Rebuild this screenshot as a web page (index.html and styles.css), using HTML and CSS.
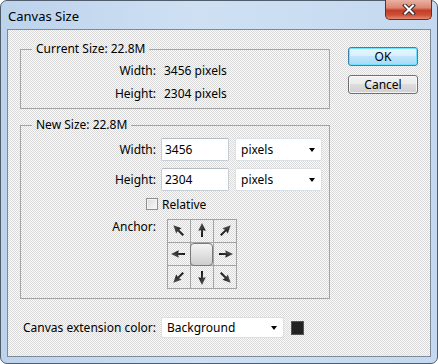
FILE: index.html
```html
<!DOCTYPE html>
<html lang="en">
<head>
    <meta charset="UTF-8">
    <title>Canvas Size</title>
    <link rel="stylesheet" href="styles.css">
</head>
<body>
    <svg width="0" height="0" class="defs">
        <defs>
            <linearGradient id="arrowFill" x1="0" y1="0" x2="1" y2="1">
                <stop offset="0" stop-color="#666"/>
                <stop offset="1" stop-color="#000"/>
            </linearGradient>
            <symbol id="arrow" viewBox="0 0 22 22">
                <polygon points="11,3 14.8,10.8 12,10.2 12,17 10,17 10,10.2 7.2,10.8" fill="url(#arrowFill)"/>
            </symbol>
        </defs>
    </svg>

    <div class="window">
        <div class="titlebar">
            <span class="title">Canvas Size</span>
            <button class="close" type="button">
                <svg width="14" height="11" viewBox="0 0 14 11">
                    <path d="M3 1.5 L11 9.5 M11 1.5 L3 9.5" stroke="#3d2a2a" stroke-width="4" stroke-linecap="square"/>
                    <path d="M3 1.5 L11 9.5 M11 1.5 L3 9.5" stroke="#fff" stroke-width="2" stroke-linecap="square"/>
                </svg>
            </button>
        </div>

        <div class="client">
            <div class="main">
                <div class="groups">
                    <fieldset class="group current">
                        <legend>Current Size: 22.8M</legend>
                        <div class="info-row">
                            <span class="label">Width:</span>
                            <span class="value">3456 pixels</span>
                        </div>
                        <div class="info-row">
                            <span class="label">Height:</span>
                            <span class="value">2304 pixels</span>
                        </div>
                    </fieldset>

                    <fieldset class="group new">
                        <legend>New Size: 22.8M</legend>
                        <div class="field-row">
                            <span class="label">Width:</span>
                            <div class="textbox">3456</div>
                            <div class="combo">pixels<span class="caret"></span></div>
                        </div>
                        <div class="field-row second">
                            <span class="label">Height:</span>
                            <div class="textbox">2304</div>
                            <div class="combo">pixels<span class="caret"></span></div>
                        </div>
                        <div class="check-row">
                            <span class="checkbox"></span>
                            <span>Relative</span>
                        </div>
                        <div class="anchor-row">
                            <span class="label">Anchor:</span>
                            <div class="anchor">
                                <div class="cell"><svg class="nw"><use href="#arrow"/></svg></div>
                                <div class="cell"><svg class="n"><use href="#arrow"/></svg></div>
                                <div class="cell"><svg class="ne"><use href="#arrow"/></svg></div>
                                <div class="cell"><svg class="w"><use href="#arrow"/></svg></div>
                                <div class="cell center"><div class="pin"></div></div>
                                <div class="cell"><svg class="e"><use href="#arrow"/></svg></div>
                                <div class="cell"><svg class="sw"><use href="#arrow"/></svg></div>
                                <div class="cell"><svg class="s"><use href="#arrow"/></svg></div>
                                <div class="cell"><svg class="se"><use href="#arrow"/></svg></div>
                            </div>
                        </div>
                    </fieldset>
                </div>

                <div class="buttons">
                    <button class="btn default" type="button">OK</button>
                    <button class="btn" type="button">Cancel</button>
                </div>
            </div>

            <div class="ext-row">
                <span class="label">Canvas extension color:</span>
                <div class="combo wide">Background<span class="caret"></span></div>
                <span class="swatch"></span>
            </div>
        </div>
    </div>
</body>
</html>
```

FILE: styles.css
```css
:root {
    --line: #a3a3a3;
    --field-border: #c5cdd6;
}

* {
    box-sizing: border-box;
}

body {
    margin: 0;
    font-family: 'Noto Sans', 'Segoe UI', sans-serif;
    font-size: 12px;
    color: #000;
    background: #fff;
}

.defs {
    position: absolute;
}

/* window frame */
.window {
    width: 438px;
    height: 364px;
    display: flex;
    flex-direction: column;
    padding: 0 6px 6px 6px;
    border: 1px solid #4f5d6d;
    border-radius: 7px;
    background: linear-gradient(90deg, #bcd3ec 0%, #cfe0f3 45%, #c4d9ef 100%);
}

.titlebar {
    height: 28px;
    margin: 0 -6px;
    padding: 2px 5px 0 7px;
    display: flex;
    align-items: flex-start;
}

.title {
    font-size: 13px;
    line-height: 26px;
    color: #000;
}

.close {
    margin: -3px 0 0 auto;
    width: 47px;
    height: 20px;
    padding: 0;
    border: 1px solid #6d2a21;
    border-top: none;
    border-radius: 0 0 5px 5px;
    background: linear-gradient(#eab1a3 0%, #dc8773 40%, #c33d27 55%, #cf5139 80%, #e28c72 100%);
    display: flex;
    align-items: center;
    justify-content: center;
}

.client {
    flex: 1;
    border: 1px solid #7d8a99;
    padding: 0 12px;
    background-color: #ebebeb;
    background-image: conic-gradient(#fafafa 25%, #dadada 0 50%, #fafafa 0 75%, #dadada 0);
    background-size: 2px 2px;
}

.main {
    display: flex;
    gap: 18px;
}

.groups {
    width: 310px;
}

/* group boxes */
.group {
    margin: 0;
    padding: 2px 0 3px 0;
    border: 1px solid var(--line);
    min-width: 0;
}

.group.current {
    margin-top: 11px;
}

.group.new {
    margin-top: 8px;
    padding: 5px 0 9px 0;
}

legend {
    margin-left: 11px;
    padding: 0 4px;
    line-height: 16px;
}

.label {
    width: 135px;
    text-align: right;
    flex-shrink: 0;
}

.info-row {
    height: 23px;
    display: flex;
    align-items: center;
    gap: 8px;
}

.field-row {
    display: flex;
    align-items: center;
    gap: 5px;
}

.field-row.second {
    margin-top: 7px;
}

.textbox {
    width: 68px;
    height: 23px;
    padding-left: 3px;
    line-height: 21px;
    background: #fff;
    border: 1px solid var(--field-border);
    border-top-color: #b4bcc6;
    border-radius: 2px;
}

.combo {
    width: 87px;
    height: 23px;
    margin-left: 1px;
    padding-left: 5px;
    line-height: 21px;
    display: flex;
    align-items: center;
    background: #fff;
    border: 1px solid #d9e0e6;
    border-radius: 2px;
}

.caret {
    margin: 1px 6px 0 auto;
    border-left: 3.5px solid transparent;
    border-right: 3.5px solid transparent;
    border-top: 4px solid #000;
}

.check-row {
    margin-top: 4px;
    height: 18px;
    padding-left: 125px;
    display: flex;
    align-items: center;
    gap: 4px;
}

.checkbox {
    width: 12px;
    height: 12px;
    border: 1px solid #8e8f8f;
    background: linear-gradient(135deg, #dcdcdc, #f8f8f8);
    box-shadow: inset 0 0 0 1px #f4f4f4;
}

.anchor-row {
    margin-top: 6px;
    display: flex;
    align-items: flex-start;
    gap: 11px;
}

.anchor-row .label {
    line-height: 16px;
}

/* anchor grid */
.anchor {
    display: grid;
    grid-template-columns: repeat(3, 23px);
    border-top: 1px solid var(--line);
    border-left: 1px solid var(--line);
}

.cell {
    height: 23px;
    border-right: 1px solid var(--line);
    border-bottom: 1px solid var(--line);
    display: flex;
}

.cell svg {
    width: 22px;
    height: 22px;
}

.nw { transform: rotate(-45deg); }
.ne { transform: rotate(45deg); }
.w { transform: rotate(-90deg); }
.e { transform: rotate(90deg); }
.sw { transform: rotate(-135deg); }
.s { transform: rotate(180deg); }
.se { transform: rotate(135deg); }

.pin {
    width: 24px;
    height: 23px;
    margin: 0 0 0 -1px;
    border: 1px solid #7a7a7a;
    border-radius: 4px;
    background: linear-gradient(#f4f4f4, #cdcdcd);
}

/* buttons */
.buttons {
    padding-top: 17px;
    display: flex;
    flex-direction: column;
    gap: 9px;
}

.btn {
    width: 70px;
    height: 19px;
    padding: 0;
    font-family: inherit;
    font-size: 12px;
    line-height: 16px;
    color: #000;
    border: 1px solid #707070;
    border-radius: 3px;
    background: linear-gradient(#f2f2f2 0%, #ebebeb 45%, #dddddd 50%, #cfcfcf 100%);
    box-shadow: inset 0 0 0 1px rgba(255, 255, 255, 0.7);
}

.btn.default {
    border-color: #3c7fb1;
    background: linear-gradient(#eaf6fd 0%, #d9f0fc 45%, #bee6fd 50%, #a7d9f5 100%);
    box-shadow: inset 0 0 0 1px #6fe2ff;
}

/* bottom row */
.ext-row {
    margin-top: 18px;
    display: flex;
    align-items: center;
    gap: 5px;
}

.ext-row .label {
    width: 136px;
}

.combo.wide {
    width: 123px;
    height: 21px;
    margin-left: 0;
    line-height: 19px;
}

.combo.wide .caret {
    margin-right: 6px;
}

.swatch {
    margin-left: 2px;
    width: 13px;
    height: 14px;
    border: 1px solid #555;
    background: #222;
}
```
